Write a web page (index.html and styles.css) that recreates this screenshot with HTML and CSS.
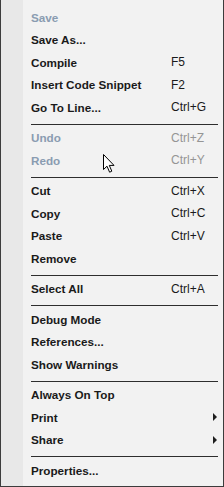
FILE: index.html
```html
<!DOCTYPE html>
<html>
<head>
<meta charset="utf-8">
<link rel="stylesheet" href="styles.css">
</head>
<body>
<div class="menu">
  <div class="item disabled"><span class="label">Save</span><span class="key"></span></div>
  <div class="item"><span class="label">Save As...</span><span class="key"></span></div>
  <div class="item"><span class="label">Compile</span><span class="key">F5</span></div>
  <div class="item"><span class="label">Insert Code Snippet</span><span class="key">F2</span></div>
  <div class="item"><span class="label">Go To Line...</span><span class="key">Ctrl+G</span></div>
  <div class="sep"></div>
  <div class="item disabled"><span class="label">Undo</span><span class="key">Ctrl+Z</span></div>
  <div class="item disabled"><span class="label">Redo</span><span class="key">Ctrl+Y</span></div>
  <div class="sep"></div>
  <div class="item"><span class="label">Cut</span><span class="key">Ctrl+X</span></div>
  <div class="item"><span class="label">Copy</span><span class="key">Ctrl+C</span></div>
  <div class="item"><span class="label">Paste</span><span class="key">Ctrl+V</span></div>
  <div class="item"><span class="label">Remove</span><span class="key"></span></div>
  <div class="sep"></div>
  <div class="item"><span class="label">Select All</span><span class="key">Ctrl+A</span></div>
  <div class="sep"></div>
  <div class="item"><span class="label">Debug Mode</span><span class="key"></span></div>
  <div class="item"><span class="label">References...</span><span class="key"></span></div>
  <div class="item"><span class="label">Show Warnings</span><span class="key"></span></div>
  <div class="sep"></div>
  <div class="item"><span class="label">Always On Top</span><span class="key"></span></div>
  <div class="item"><span class="label">Print</span><span class="key"><span class="arrow"></span></span></div>
  <div class="item"><span class="label">Share</span><span class="key"><span class="arrow"></span></span></div>
  <div class="sep"></div>
  <div class="item"><span class="label">Properties...</span><span class="key"></span></div>
  <svg class="cursor" width="13" height="20" viewBox="0 0 13 20">
    <path d="M0.5 0.5 L0.5 15.5 L4 12.2 L6.6 18.2 L8.8 17.2 L6.3 11.4 L11 11.4 Z" fill="#fff" stroke="#000" stroke-width="1" stroke-linejoin="miter"/>
  </svg>
</div>
</body>
</html>
```

FILE: styles.css
```css
html, body {
  margin: 0;
  padding: 0;
  background: #f2f2f2;
}
.menu {
  position: relative;
  width: 222px;
  height: 480px;
  padding: 6px 0 0 0;
  border-left: 1px solid #3c3c3c;
  border-right: 1px solid #3c3c3c;
  border-bottom: 1px solid #3c3c3c;
  background: linear-gradient(to right, #e8e8e8 22px, #f2f2f2 22px);
  font-family: "Liberation Sans", Arial, sans-serif;
  color: #1a1a1a;
}
.item {
  display: flex;
  align-items: center;
  height: 22.5px;
  padding: 0 6px 0 30px;
}
.label {
  flex: 1;
  font-size: 11.7px;
  font-weight: bold;
  white-space: nowrap;
}
.key {
  width: 46px;
  font-size: 12px;
  display: flex;
  justify-content: flex-start;
  white-space: nowrap;
}
.disabled .label {
  color: #8a9cb1;
}
.disabled .key {
  color: #959595;
}
.arrow {
  margin-left: auto;
  width: 0;
  height: 0;
  border-top: 4px solid transparent;
  border-bottom: 4px solid transparent;
  border-left: 4px solid #1e1e1e;
}
.sep {
  height: 1px;
  margin: 5px 5px 2px 30px;
  background: #2e2e2e;
}
.cursor {
  position: absolute;
  left: 102px;
  top: 154px;
}
```
